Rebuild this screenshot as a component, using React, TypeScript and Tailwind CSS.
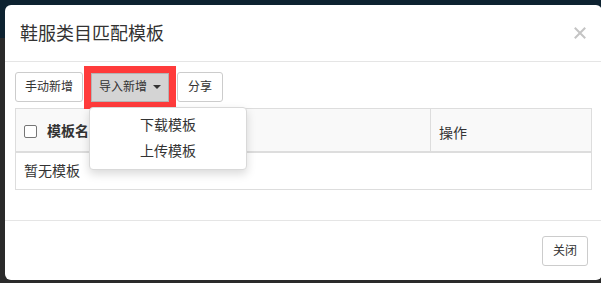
import React from 'react';

const font = { fontFamily: '"Liberation Sans", "Noto Sans CJK SC", sans-serif' };

function CloseIcon() {
  return (
    <svg width="12" height="12" viewBox="0 0 12 12" className="text-[#c4c4c4]">
      <path d="M1.5 1.5 L10.5 10.5 M10.5 1.5 L1.5 10.5" stroke="currentColor" strokeWidth="2" strokeLinecap="square" />
    </svg>
  );
}

export default function App() {
  const menuItems = ['下载模板', '上传模板'];

  return (
    <div
      style={font}
      className="w-[601px] h-[283px] overflow-hidden pl-[5px] pt-[5px] bg-[linear-gradient(#0d2230_0,#0d2230_38px,#2a2a2a_38px)] text-[#333]"
    >
      <div className="w-[597px] h-[275px] bg-white rounded-md flex flex-col">
        {/* header */}
        <div className="h-[57px] flex items-center justify-between pl-[15px] pr-[16px] border-b border-[#e5e5e5]">
          <h4 className="text-[18px] leading-none pt-[1px]">鞋服类目匹配模板</h4>
          <CloseIcon />
        </div>

        {/* body */}
        <div className="h-[158px] px-[10px] pt-[10px]">
          <div className="flex items-center gap-2 h-[30px]">
            <button className="h-[30px] px-[9px] border border-[#ccc] rounded-[3px] bg-white text-[12px]">
              手动新增
            </button>
            <div className="relative">
              <button className="h-[29px] w-[78px] flex items-center justify-center gap-[6px] bg-[#d4d4d4] border border-[#b4b4b4] text-[12px] outline-[7px] outline-solid outline-[#ff3b3b]">
                导入新增
                <span className="w-0 h-0 border-t-[4px] border-t-[#333] border-x-[4px] border-x-transparent" />
              </button>
              <div className="absolute left-[-2px] top-[34px] z-10 w-[158px] h-[63px] bg-white border border-[#d9d9d9] rounded-[4px] shadow-[0_4px_10px_rgba(0,0,0,0.15)] pt-[5px]">
                {menuItems.map(item => (
                  <div key={item} className="h-[26px] flex items-center justify-center text-[14px]">
                    {item}
                  </div>
                ))}
              </div>
            </div>
            <button className="h-[30px] px-[10px] border border-[#ccc] rounded-[3px] bg-white text-[12px]">
              分享
            </button>
          </div>

          <div className="mt-[6px] border border-[#ddd] text-[14px]">
            <div className="flex h-[44px] bg-[#f9f9f9] border-b-2 border-[#ddd]">
              <div className="w-[415px] border-r border-[#ddd] flex items-center pl-[8px] pt-[2px]">
                <span className="w-[13px] h-[13px] border border-[#767676] rounded-[2px] bg-white" />
                <span className="ml-[10px] font-bold">模板名称</span>
              </div>
              <div className="flex-1 flex items-end pl-[8px] pb-[7px]">操作</div>
            </div>
            <div className="h-[36px] flex items-center pl-[8px]">暂无模板</div>
          </div>
        </div>

        {/* footer */}
        <div className="flex-1 border-t border-[#e5e5e5] flex justify-end pt-[15px] pr-[14px]">
          <button className="h-[30px] w-[46px] border border-[#ccc] rounded-[3px] bg-white text-[12px]">
            关闭
          </button>
        </div>
      </div>
    </div>
  );
}
